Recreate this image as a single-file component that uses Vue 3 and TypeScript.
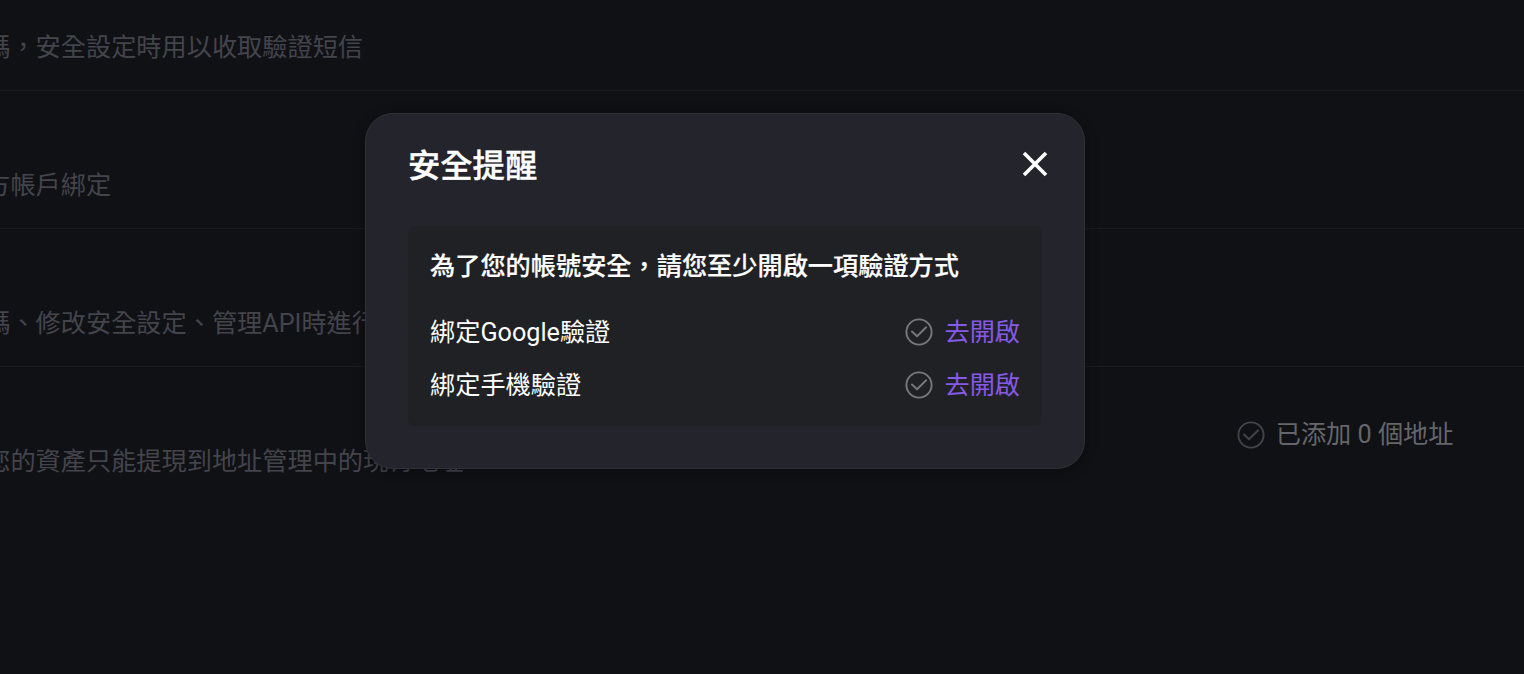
<script setup lang="ts">
import { ref } from 'vue'

interface Row {
  desc: string
  status?: string
}

const rows: Row[] = [
  { desc: '碼，安全設定時用以收取驗證短信' },
  { desc: '方帳戶綁定' },
  { desc: '碼、修改安全設定、管理API時進行' },
  { desc: '您的資產只能提現到地址管理中的現有地址', status: '已添加 0 個地址' },
]

const methods: string[] = ['綁定Google驗證', '綁定手機驗證']
const open = ref(true)
</script>

<template>
  <div class="page" lang="zh-TW">
    <section class="settings">
      <div v-for="row in rows" :key="row.desc" class="row">
        <p class="desc">{{ row.desc }}</p>
        <div v-if="row.status" class="status">
          <svg class="check" viewBox="0 0 28 28" aria-hidden="true">
            <circle cx="14" cy="14" r="12.6" />
            <path d="M7 13.5l5 4.8 9.2-9" />
          </svg>
          <span>{{ row.status }}</span>
        </div>
      </div>
    </section>

    <div v-if="open" class="modal" role="dialog">
      <header class="head">
        <h2 class="title">安全提醒</h2>
        <button class="close" type="button" aria-label="關閉" @click="open = false">
          <svg viewBox="0 0 26 26" aria-hidden="true">
            <path d="M2 2l22 22M24 2L2 24" />
          </svg>
        </button>
      </header>
      <div class="panel">
        <h3 class="notice">為了您的帳號安全，請您至少開啟一項驗證方式</h3>
        <div v-for="m in methods" :key="m" class="method">
          <span>{{ m }}</span>
          <div class="action">
            <svg class="check" viewBox="0 0 28 28" aria-hidden="true">
              <circle cx="14" cy="14" r="12.6" />
              <path d="M7 13.5l5 4.8 9.2-9" />
            </svg>
            <a class="link">去開啟</a>
          </div>
        </div>
      </div>
    </div>
  </div>
</template>

<style>
body {
  margin: 0;
  background: #101115;
}
</style>

<style scoped>
.page {
  position: relative;
  height: 674px;
  overflow: hidden;
  background: #101115;
  font-family: Roboto, 'Noto Sans CJK TC', sans-serif;
  font-size: 25.2px;
  line-height: 36px;
}
.settings {
  margin-top: -47px;
}
.row {
  display: flex;
  justify-content: space-between;
  box-sizing: border-box;
  height: 138px;
  padding-right: 70.5px;
  border-bottom: 1px solid #191a1e;
}
.row:last-child {
  border-bottom-color: transparent;
}
.desc {
  margin: 77px 0 0 -14.8px;
  color: #43444c;
  white-space: nowrap;
}
.status {
  display: flex;
  align-items: center;
  align-self: center;
  gap: 11.5px;
  margin-bottom: 1px;
  color: #65666b;
  white-space: nowrap;
}
.status .check {
  margin-right: -0.5px;
}
.check {
  display: block;
  flex: none;
  width: 28px;
  height: 28px;
  fill: none;
  stroke: #42434b;
  stroke-width: 1.9;
  stroke-linecap: round;
  stroke-linejoin: round;
}
.modal {
  position: absolute;
  top: 113px;
  left: 365px;
  box-sizing: border-box;
  width: 720px;
  height: 356px;
  padding: 29px 42px 42px;
  border: 1px solid #303137;
  border-radius: 28px;
  background: #24242d;
  box-shadow: 0 2px 12px rgba(0, 0, 0, 0.35);
  color: #fff;
}
.head {
  display: flex;
  justify-content: space-between;
  height: 83px;
}
.title {
  margin: 0;
  font-size: 32.3px;
  font-weight: 500;
  line-height: 46px;
  -webkit-text-stroke: 0.4px #fff;
}
.close {
  width: 26px;
  height: 26px;
  margin: 7.5px -5.5px 0 0;
  padding: 0;
  border: 0;
  background: none;
}
.close svg {
  display: block;
  width: 26px;
  height: 26px;
  stroke: #fff;
  stroke-width: 3.6;
}
.panel {
  box-sizing: border-box;
  height: 200px;
  padding: 23px 22px 0;
  border-radius: 7px;
  background: #202125;
}
.notice {
  margin: 0 0 22px;
  font-size: 25.2px;
  font-weight: 500;
  line-height: 36px;
  -webkit-text-stroke: 0.2px #fff;
}
.method {
  display: flex;
  align-items: center;
  justify-content: space-between;
  height: 52.5px;
}
.action {
  display: flex;
  align-items: center;
  gap: 11px;
}
.action .check {
  margin-bottom: 2px;
  stroke: #77787c;
}
.link {
  color: #8659e8;
}
</style>
